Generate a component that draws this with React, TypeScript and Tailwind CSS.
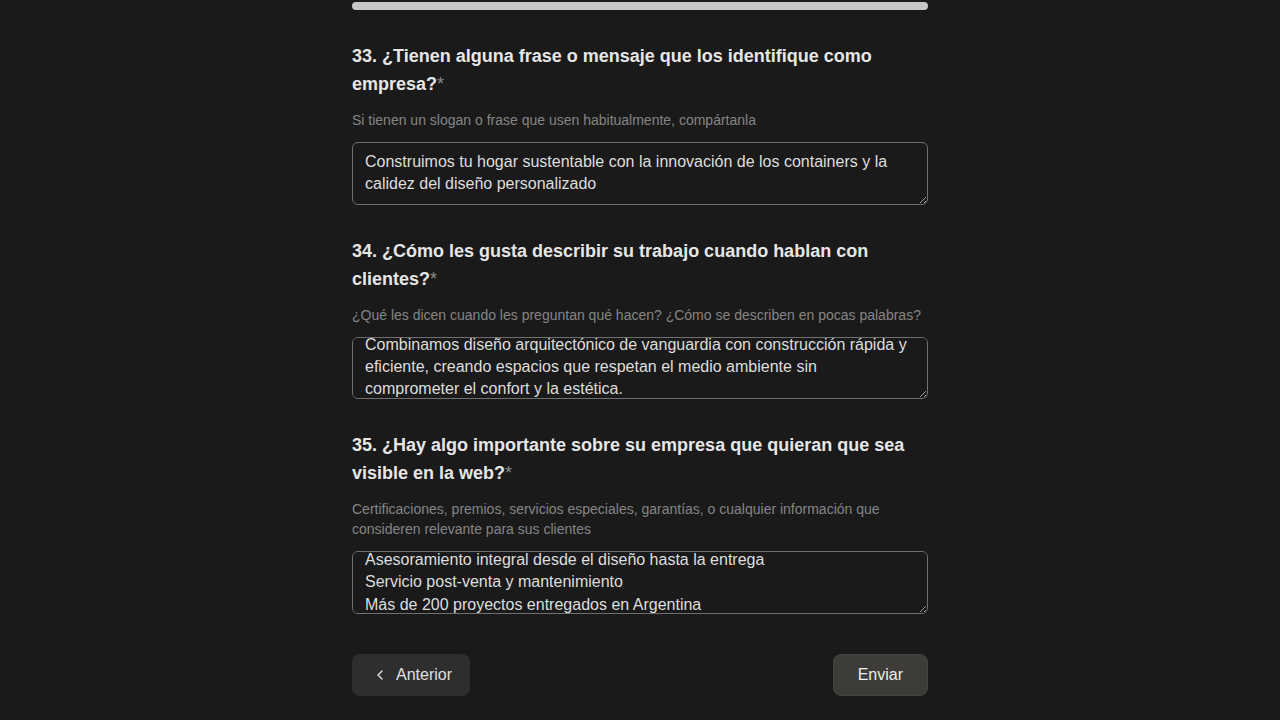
import React, { useEffect, useRef } from "react";
import { ChevronLeft } from "lucide-react";

type Q = {
  n: number;
  title: string;
  hint: string;
  value: string;
  scroll: number;
};

const questions: Q[] = [
  {
    n: 33,
    title: "¿Tienen alguna frase o mensaje que los identifique como empresa?",
    hint: "Si tienen un slogan o frase que usen habitualmente, compártanla",
    value:
      "Construimos tu hogar sustentable con la innovación de los containers y la calidez del diseño personalizado",
    scroll: 0,
  },
  {
    n: 34,
    title: "¿Cómo les gusta describir su trabajo cuando hablan con clientes?",
    hint: "¿Qué les dicen cuando les preguntan qué hacen? ¿Cómo se describen en pocas palabras?",
    value:
      "Combinamos diseño arquitectónico de vanguardia con construcción rápida y eficiente, creando espacios que respetan el medio ambiente sin comprometer el confort y la estética.",
    scroll: 12,
  },
  {
    n: 35,
    title: "¿Hay algo importante sobre su empresa que quieran que sea visible en la web?",
    hint: "Certificaciones, premios, servicios especiales, garantías, o cualquier información que consideren relevante para sus clientes",
    value:
      "Garantía estructural de 10 años en todas nuestras construcciones\nCertificación de eficiencia energética\nAsesoramiento integral desde el diseño hasta la entrega\nServicio post-venta y mantenimiento\nMás de 200 proyectos entregados en Argentina",
    scroll: 56,
  },
];

function Question({ q }: { q: Q }) {
  const ref = useRef<HTMLTextAreaElement>(null);
  useEffect(() => {
    if (ref.current) ref.current.scrollTop = q.scroll;
  }, [q.scroll]);
  return (
    <div className="flex flex-col">
      <h2 className="text-[18px] leading-7 font-bold text-[#e6e6e6]">
        {q.n}. {q.title}
        <span className="font-normal text-[#8a8a8a]">*</span>
      </h2>
      <p className="mt-3 text-sm leading-5 text-[#858585]">{q.hint}</p>
      <textarea
        ref={ref}
        rows={2}
        defaultValue={q.value}
        className="mt-3 block w-full rounded-md border border-[#6f6f6f] bg-[#1a1a1a] px-3 py-[7.95px] text-[16px] leading-[1.4] text-[#dedede] outline-none [scrollbar-width:none] [color-scheme:dark] resize-y"
      />
    </div>
  );
}

export default function App() {
  return (
    <div
      className="min-h-screen bg-[#1a1a1a]"
      style={{ fontFamily: '"Liberation Sans", Arial, sans-serif' }}
    >
      <div className="mx-auto w-[576px] pt-[2px]">
        <div className="h-2 w-full rounded-full bg-[#c6c6c4]" />
        <div className="mt-8 flex flex-col gap-8">
          {questions.map((q) => (
            <Question key={q.n} q={q} />
          ))}
        </div>
        <div className="mt-10 flex items-center justify-between">
          <button className="flex h-[42px] items-center gap-2 rounded-lg bg-[#2e2e2e] pl-5 pr-[18px] text-[16px] text-[#e0e0e0]">
            <ChevronLeft size={16} strokeWidth={2} />
            <span>Anterior</span>
          </button>
          <button className="flex h-[42px] items-center rounded-lg border border-[#44433f] bg-[#3d3c39] px-6 text-[16px] text-[#ececec]">
            Enviar
          </button>
        </div>
      </div>
    </div>
  );
}
